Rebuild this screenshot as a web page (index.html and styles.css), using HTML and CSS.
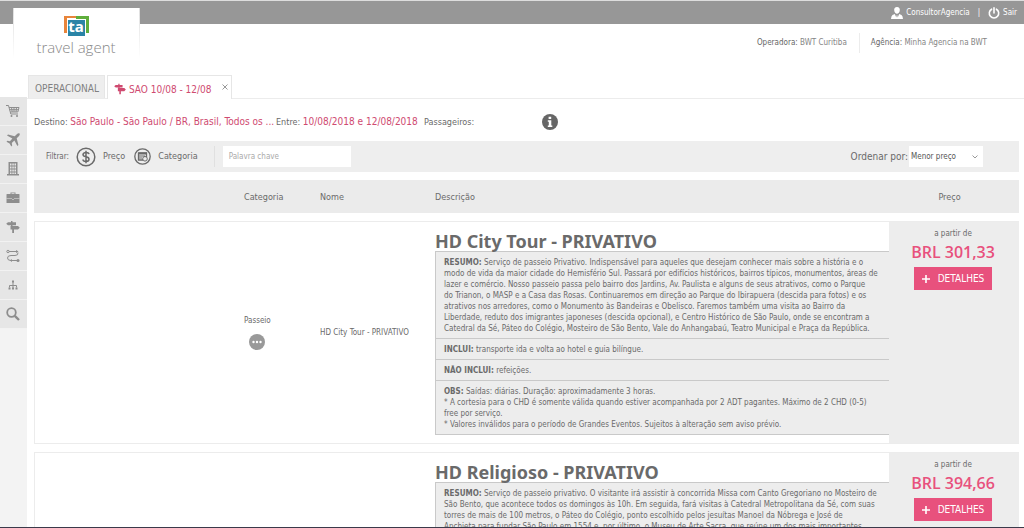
FILE: index.html
```html
<!DOCTYPE html>
<html lang="pt-BR">
<head>
<meta charset="utf-8">
<title>Travel Agent</title>
<link rel="stylesheet" href="styles.css">
</head>
<body>
<div class="app">
  <header class="top">
    <div class="topbar">
      <a class="user" href="#"><svg width="12" height="12" viewBox="0 0 12 12" fill="currentColor"><path d="M6 0C3.900 0 3 1.500 3.200 3.300 3.400 5.400 4.600 6.800 6 6.800S8.600 5.400 8.800 3.300C9 1.500 8.100 0 6 0zM3.800 7 1.500 7.900Q.2 8.600 0 12h12Q11.800 8.600 10.500 7.900L8.200 7 6.700 10.500 6.300 8.200H5.700L5.300 10.500z"/></svg>ConsultorAgencia</a>
      <span class="bar">|</span>
      <a class="exit" href="#"><svg width="12" height="12" viewBox="0 0 12 12" fill="none" stroke="currentColor" stroke-width="1.600" stroke-linecap="round"><path d="M3.600 2.200A4.700 4.700 0 1 0 8.400 2.200M6 .8V6"/></svg>Sair</a>
    </div>
    <a class="logo" href="#" aria-label="travel agent">
      <svg width="84" height="42" viewBox="0 0 84 42">
        <path d="M29 1H41V3H32V18H29z" fill="#e8853b"/>
        <path d="M41 1H54V18H51V4H41z" fill="#5fae3c"/>
        <rect x="33" y="5" width="17" height="16" fill="#2a84a6"/>
        <text x="41" y="17" class="logo-mark">ta</text>
        <text x="41" y="38" class="logo-word">travel agent</text>
      </svg>
    </a>
    <div class="agency">
      <span><b>Operadora:</b> BWT Curitiba</span>
      <span><b>Agência:</b> Minha Agencia na BWT</span>
    </div>
  </header>

  <div class="body">
    <nav class="side" aria-label="Menu">
      <a href="#" aria-label="Carrinho"><svg viewBox="0 0 14 14" fill="none" stroke="currentColor"><path d="M0 1.500H2.500L4.800 10H12M3 3.500H13L11.800 8H4.400M5.500 3.500 6.200 8M8 3.500V8M10.500 3.500 10 8M3.500 5.700H12.500"/><circle cx="5.500" cy="12" r="1" fill="currentColor" stroke="none"/><circle cx="11" cy="12" r="1" fill="currentColor" stroke="none"/></svg></a>
      <a href="#" aria-label="Aéreo"><svg viewBox="0 0 14 14" fill="currentColor"><path d="M13.500.5C12.800-.2 11.600.4 10.800 1.200L8.700 3.300 2 1.600 1 2.600 6.400 5.600 3.900 8.200 1.400 7.800.5 8.700 3.600 10.400 5.300 13.500 6.200 12.600 5.800 10.100 8.400 7.600 11.400 13 12.400 12 10.700 5.300 12.800 3.200C13.600 2.400 14.200 1.200 13.500.5z"/></svg></a>
      <a href="#" aria-label="Hotel"><svg viewBox="0 0 14 14" fill="currentColor"><path fill-rule="evenodd" d="M2.500 0H11.500V12H13V13.500H1V12H2.500zM4 1.500V3.500H5.500V1.500zM6.300 1.500V3.500H7.800V1.500zM8.500 1.500V3.500H10V1.500zM4 4.500V6.500H5.500V4.500zM6.300 4.500V6.500H7.800V4.500zM8.500 4.500V6.500H10V4.500zM4 7.500V9.500H5.500V7.500zM6.300 7.500V9.500H7.800V7.500zM8.500 7.500V9.500H10V7.500zM4 10.500V12H5.500V10.500zM6.300 10.500V12H7.800V10.500zM8.500 10.500V12H10V10.500z"/></svg></a>
      <a href="#" aria-label="Pacotes"><svg viewBox="0 0 14 14" fill="currentColor"><path fill-rule="evenodd" d="M4.500 3V1.500H9.500V3H13Q13.500 3 13.500 3.500V12H.5V3.500Q.5 3 1 3zM5.500 3H8.500V2.300H5.500z"/><path d="M.5 7.500H6M8 7.500H13.500M6 8.500H8" stroke="#e6e6e6" stroke-width=".5"/></svg></a>
      <a href="#" aria-label="Passeios"><svg viewBox="0 0 14 14" fill="currentColor"><path d="M5 1H6.500V2.200H10V5.200H6.500V5.900H12L13.800 7.700 12 9.500H8V13H6.200V9.500H4.500V5.900H5V5.200H2L.2 3.700 2 2.200H5z"/></svg></a>
      <a href="#" aria-label="Roteiro"><svg viewBox="0 0 14 14" fill="none" stroke="currentColor"><path d="M3 2.500H11M12 3.500Q12.500 6.500 9 6.500H5Q1.500 6.500 1.500 9T5 11.500H11"/><circle cx="2" cy="2.500" r="1.200"/><circle cx="12" cy="11.500" r="1.500" fill="currentColor" stroke="none"/><path d="M10 1V4L12.500 2.500zM6 10V13L4 11.500z" fill="currentColor" stroke="none"/></svg></a>
      <a href="#" aria-label="Estrutura"><svg viewBox="0 0 14 14" fill="none" stroke="currentColor"><path d="M7 4V10M3.500 9.500V7.500H10.500V9.500"/><path d="M6 2.500H8V4.500H6zM2.500 9.500H4.500V11.500H2.500zM6 9.500H8V11.500H6zM9.500 9.500H11.500V11.500H9.500z" fill="currentColor" stroke="none"/></svg></a>
      <a href="#" aria-label="Buscar"><svg viewBox="0 0 14 14" fill="none" stroke="currentColor" stroke-width="1.800"><circle cx="5.500" cy="5.500" r="4.300"/><path d="M8.800 8.800 13 13" stroke-width="2.400"/></svg></a>
    </nav>

    <main class="main">
      <div class="tabs">
        <a class="tab" href="#">OPERACIONAL</a>
        <div class="tab active">
          <a href="#"><svg width="12" height="12" viewBox="0 0 14 14" fill="currentColor"><path d="M5 1H6.500V2.200H10V5.200H6.500V5.900H12L13.800 7.700 12 9.500H8V13H6.200V9.500H4.500V5.900H5V5.200H2L.2 3.700 2 2.200H5z"/></svg>SAO 10/08 - 12/08</a>
          <button class="close" aria-label="Fechar"><svg width="6" height="6" viewBox="0 0 6 6" stroke="currentColor"><path d="M.5.5 5.500 5.500M5.500.5.5 5.500"/></svg></button>
        </div>
      </div>

      <div class="content">
        <div class="search">
          <span class="dest">Destino: <em>São Paulo - São Paulo / BR, Brasil, Todos os ...</em></span>
          <span class="dates">Entre: <em>10/08/2018 e 12/08/2018</em></span>
          <span class="pax">Passageiros:</span>
          <button class="info" aria-label="Informações"><svg width="16" height="16" viewBox="0 0 16 16"><circle cx="8" cy="8" r="8" fill="#666"/><path d="M6.600 2.800H9.200V5H6.600zM5.800 6.200H9.300V11.500H10.300V13H5.800V11.500H6.800V7.700H5.800z" fill="#fff"/></svg></button>
        </div>

        <form class="filter">
          <span class="small">Filtrar:</span>
          <button type="button" class="by"><svg width="20" height="20" viewBox="0 0 20 20" fill="none" stroke="currentColor" stroke-width="1.500"><circle cx="10" cy="10" r="8.800"/><path d="M13 7.200Q12.600 5.400 10 5.400T7 7.500Q7 9.300 10 9.800T13 12.300Q13 14.500 10 14.500T7 12.500M10 3.800V16.200"/></svg>Preço</button>
          <button type="button" class="by cat"><svg width="17" height="17" viewBox="0 0 17 17" fill="none" stroke="currentColor" stroke-width="1.300"><circle cx="8.500" cy="8.500" r="7.700"/><path d="M4.500 5H12.500V9M4.500 4.500V12H9" /><path d="M4 4.500H13V6.500H4zM5 7.500H11V8.500H5zM5 9.500H8V10.500H5z" fill="currentColor" stroke="none"/><circle cx="11" cy="10.800" r="2.300" stroke-width="1"/></svg>Categoria</button>
          <input class="keyword" type="text" placeholder="Palavra chave" aria-label="Palavra chave">
          <label class="order" for="order">Ordenar por:</label>
          <span class="pick"><select id="order"><option>Menor preço</option><option>Maior preço</option></select><svg width="6" height="4" viewBox="0 0 6 4" fill="none" stroke="#999"><path d="M.5.5 3 3 5.500.5"/></svg></span>
        </form>

        <table class="results">
          <colgroup><col class="c-pic"><col class="c-cat"><col class="c-name"><col><col class="c-price"></colgroup>
          <thead>
            <tr><th></th><th>Categoria</th><th>Nome</th><th>Descrição</th><th class="center">Preço</th></tr>
          </thead>
          <tbody>
            <tr>
              <td></td>
              <td><div class="kind">Passeio<svg width="16" height="16" viewBox="0 0 16 16"><circle cx="8" cy="8" r="8" fill="#999"/><g fill="#fff"><circle cx="4.500" cy="8" r="1.200"/><circle cx="8" cy="8" r="1.200"/><circle cx="11.500" cy="8" r="1.200"/></g></svg></div></td>
              <td>HD City Tour - PRIVATIVO</td>
              <td class="desc">
                <h2>HD City Tour - PRIVATIVO</h2>
                <p><b>RESUMO:</b> Serviço de passeio Privativo. Indispensável para aqueles que desejam conhecer mais sobre a história e o<br>modo de vida da maior cidade do Hemisfério Sul. Passará por edifícios históricos, bairros típicos, monumentos, áreas de<br>lazer e comércio. Nosso passeio passa pelo bairro dos Jardins, Av. Paulista e alguns de seus atrativos, como o Parque<br>do Trianon, o MASP e a Casa das Rosas. Continuaremos em direção ao Parque do Ibirapuera (descida para fotos) e os<br>atrativos nos arredores, como o Monumento às Bandeiras e Obelisco. Faremos também uma visita ao Bairro da<br>Liberdade, reduto dos imigrantes japoneses (descida opcional), e Centro Histórico de São Paulo, onde se encontram a<br>Catedral da Sé, Páteo do Colégio, Mosteiro de São Bento, Vale do Anhangabaú, Teatro Municipal e Praça da República.</p>
                <p><b>INCLUI:</b> transporte ida e volta ao hotel e guia bilíngue.</p>
                <p><b>NÃO INCLUI:</b> refeições.</p>
                <p><b>OBS:</b> Saídas: diárias. Duração: aproximadamente 3 horas.<br>* A cortesia para o CHD é somente válida quando estiver acompanhada por 2 ADT pagantes. Máximo de 2 CHD (0-5)<br>free por serviço.<br>* Valores inválidos para o período de Grandes Eventos. Sujeitos à alteração sem aviso prévio.</p>
              </td>
              <td class="price">a partir de<strong>BRL 301,33</strong><button class="details"><svg width="8" height="8" viewBox="0 0 8 8" stroke="#fff" stroke-width="1.600"><path d="M4 0V8M0 4H8"/></svg>DETALHES</button></td>
            </tr>
            <tr>
              <td></td>
              <td></td>
              <td></td>
              <td class="desc">
                <h2>HD Religioso - PRIVATIVO</h2>
                <p><b>RESUMO:</b> Serviço de passeio privativo. O visitante irá assistir à concorrida Missa com Canto Gregoriano no Mosteiro de<br>São Bento, que acontece todos os domingos às 10h. Em seguida, fará visitas à Catedral Metropolitana da Sé, com suas<br>torres de mais de 100 metros, o Páteo do Colégio, ponto escolhido pelos jesuítas Manoel da Nóbrega e José de<br>Anchieta para fundar São Paulo em 1554 e, por último, o Museu de Arte Sacra, que reúne um dos mais importantes</p>
              </td>
              <td class="price">a partir de<strong>BRL 394,66</strong><button class="details"><svg width="8" height="8" viewBox="0 0 8 8" stroke="#fff" stroke-width="1.600"><path d="M4 0V8M0 4H8"/></svg>DETALHES</button></td>
            </tr>
          </tbody>
        </table>
      </div>
    </main>
  </div>
</div>
</body>
</html>
```
FILE: styles.css
```css
* { box-sizing: border-box; }
body { margin: 0; background: #fff; color: #6a6a6a; font: 8px/11px "DejaVu Sans Condensed", "Noto Sans", sans-serif; }
a { color: inherit; text-decoration: none; }
button, input, select { font: inherit; color: inherit; border: 0; padding: 0; margin: 0; background: none; }
svg { flex: none; display: block; }
em { font-style: normal; color: #cf4a70; }

.app { height: 100vh; overflow: hidden; display: flex; flex-direction: column; border-bottom: 1px solid #3b3a4a; }

.top { position: relative; flex: none; height: 75px; }
.topbar { height: 24px; border-top: 1px solid #ddd; background: #979797; color: #fff; display: flex; justify-content: flex-end; align-items: center; gap: 8px; padding-right: 7px; }
.user, .exit { display: flex; align-items: center; gap: 3px; }
.logo { position: absolute; left: 13px; top: 8px; width: 127px; height: 50px; background: #fff; display: flex; justify-content: center; padding-top: 7px; border: solid #e4e4e4; border-width: 0 1px; border-image: linear-gradient(#ddd, #fff) 1; }
.logo-mark { font: bold 15px "Noto Sans", sans-serif; fill: #fff; text-anchor: middle; }
.logo-word { font: 300 15px "Open Sans", "Noto Sans", sans-serif; fill: #888; text-anchor: middle; }
.agency { display: flex; justify-content: flex-end; padding: 9px 37px 0 0; color: #858585; line-height: 20px; }
.agency b { font-weight: 400; color: #666; }
.agency span + span { border-left: 1px solid #ececec; margin-left: 12px; padding-left: 11px; }

.body { flex: 1; min-height: 0; display: flex; }
.side { flex: none; width: 27px; margin-top: 22px; background: #f3f3f3; }
.side a { display: flex; align-items: center; justify-content: center; height: 29px; padding-right: 2px; background: #e6e6e6; border-bottom: 1px solid #f2f2f2; color: #8d8d8d; }
.side svg { width: 14px; height: 14px; }

.main { flex: 1; min-width: 0; }
.tabs { display: flex; gap: 2px; height: 24px; border-bottom: 1px solid #ececec; padding-left: 1px; font-size: 10px; }
.tab { display: flex; align-items: center; height: 23px; padding: 3px 5px 0 6px; background: #eee; border: 1px solid #e6e6e6; border-bottom: 0; color: #808080; }
.tab.active { height: 24px; background: #fff; color: #cf4a70; padding-right: 2px; }
.tab.active a { display: flex; align-items: center; gap: 3px; }
.close { color: #999; margin-left: 8px; padding: 0 1px 4px 2px; }

.content { padding: 0 5px 0 7px; }
.search { display: flex; align-items: center; height: 42px; padding-top: 4px; font-size: 9px; }
.search em { font-size: 10px; }
.dest { width: 242px; white-space: nowrap; }
.dates { width: 148px; white-space: nowrap; }
.pax { width: 118px; }

.filter { display: flex; align-items: center; height: 31px; background: #eee; padding: 0 36px 0 12px; }
.small { width: 30px; }
.by { display: flex; align-items: center; gap: 7px; font-size: 9px; }
.cat { margin-left: 9px; }
.keyword { width: 137px; height: 21px; margin-left: 16px; background: #fff; background-clip: content-box; border-left: 1px solid #e0e0e0; padding-left: 8px; text-indent: 6px; }
.keyword::placeholder { color: #aaa; opacity: 1; }
.order { margin-left: auto; font-size: 10px; }
.pick { position: relative; margin-left: 1px; }
.pick select { appearance: none; display: block; width: 74px; height: 21px; background: #fff; padding-left: 2px; color: #555; }
.pick svg { position: absolute; right: 5px; top: 9px; pointer-events: none; }

.results { width: 100%; table-layout: fixed; border-collapse: separate; border-spacing: 0 8px; }
.c-pic { width: 210px; }
.c-cat { width: 76px; }
.c-name { width: 115px; }
.c-price { width: 130px; }
.results th { height: 33px; padding: 2px 0 0; background: #ebebeb; font-size: 9px; font-weight: 400; text-align: left; }
.results th.center { text-align: center; padding-right: 9px; }
.results td { padding: 0; border: solid #ececec; border-width: 1px 0; }
.results td:first-child { border-left-width: 1px; }
.results td.desc { padding: 9px 0 8px; vertical-align: top; }
.desc h2 { margin: 0; font: bold 18px/20px "Noto Sans", sans-serif; }
.desc p { margin: 0; padding: 5px 0 4px 8px; background: #ededed; border: solid #c9c9c9; border-width: 0 0 1px 1px; white-space: nowrap; }
.desc h2 + p { border-top-width: 1px; }
.kind { display: inline-flex; flex-direction: column; align-items: center; gap: 8px; }
.results td.price { background: #ededed; vertical-align: top; text-align: center; padding: 6px 2px 0 0; }
.price strong { display: block; margin: 4px 0 6px; font: 600 16px/18px "Open Sans", sans-serif; color: #e8517d; }
.details { display: flex; align-items: center; justify-content: center; gap: 8px; width: 78px; height: 23px; margin: 0 auto; background: #e8517d; color: #fff; font-size: 10px; }
```
